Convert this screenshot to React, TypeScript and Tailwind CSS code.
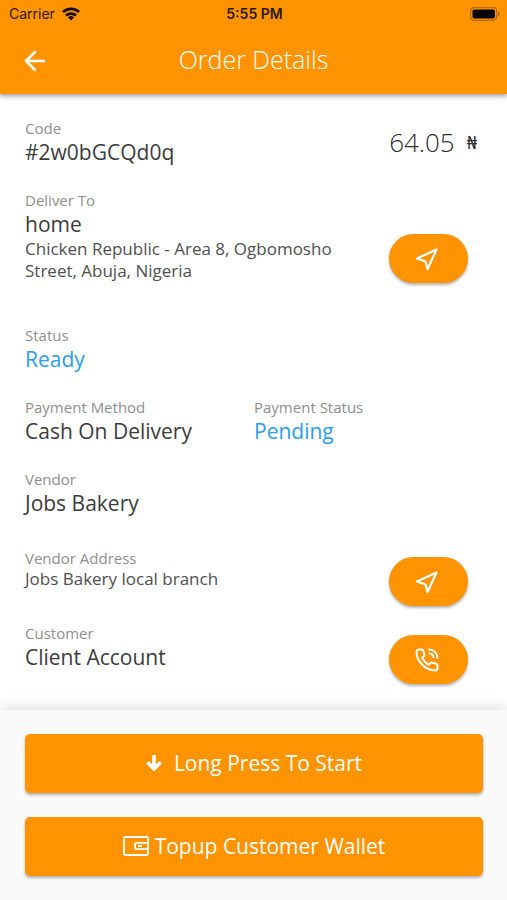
import type { ReactNode } from "react"

function Field({ label, children }: { label: string; children: ReactNode }) {
  return (
    <div className="min-w-0">
      <dt className="text-[15px] leading-5 text-[#8f8f8f]">{label}</dt>
      <dd>{children}</dd>
    </div>
  )
}

function Value({ children, accent = false }: { children: ReactNode; accent?: boolean }) {
  return <p className={`text-[21px] leading-7 ${accent ? "text-[#2a9df4]" : "text-[#3c3c3c]"}`}>{children}</p>
}

function PillButton({ label, children }: { label: string; children: ReactNode }) {
  return (
    <button
      type="button"
      aria-label={label}
      className="mr-[15px] flex h-[49px] w-[79px] shrink-0 items-center justify-center self-end rounded-full bg-[#ff9300] pr-1 text-white shadow-[0_2px_3px_rgba(0,0,0,0.3)]"
    >
      {children}
    </button>
  )
}

function NavigationIcon() {
  return (
    <svg className="size-6" viewBox="0 0 24 24" fill="none" stroke="currentColor" strokeWidth="2.2" strokeLinejoin="round">
      <path d="M21.500 2.500 12.500 22 10.500 14.500 2 11.500Z" />
    </svg>
  )
}

function PhoneIcon() {
  return (
    <svg
      className="size-6"
      viewBox="0 0 24 24"
      fill="none"
      stroke="currentColor"
      strokeWidth="2"
      strokeLinecap="round"
      strokeLinejoin="round"
    >
      <path d="M14.500 5.500A4.500 4.500 0 0 1 18.500 9.500M14 1.500A8.500 8.500 0 0 1 22.500 10" />
      <path d="M1.500 4C1.500 2.500 2.500 1.500 4 1.500h2.500c1 0 1.600.6 1.900 1.500l.9 3.400c.2.800 0 1.500-.6 2.100L7.200 10c1.400 2.900 3.500 5.200 6.600 6.800l1.600-1.500c.6-.6 1.300-.8 2.100-.6l3.400.9c1 .3 1.600.9 1.600 1.900V20c0 1.500-1 2.500-2.500 2.500C10.500 22.500 1.500 13.500 1.500 4Z" />
    </svg>
  )
}

function StatusBar() {
  return (
    <div className="grid h-7 grid-cols-3 items-center pr-[7px] pl-[9px] font-['Inter',sans-serif] text-[14px] leading-5 text-[#2b1900]">
      <div className="flex items-center gap-[7px]">
        <span>Carrier</span>
        <svg className="h-[14px] w-[18px] text-[#140c00]" viewBox="0 0 18 14" fill="none" stroke="currentColor" strokeWidth="2.8">
          <path d="M1 5a11.6 11.6 0 0 1 16 0M4 8.500a7.400 7.400 0 0 1 10 0" />
          <path d="M9 13.5 6 10.500a4.400 4.400 0 0 1 6 0Z" fill="currentColor" stroke="none" />
        </svg>
      </div>
      <span className="text-center font-semibold">5:55 PM</span>
      <svg className="h-[14px] w-[30px] justify-self-end" viewBox="0 0 30 14">
        <rect x="0.7" y="0.7" width="26" height="12.6" rx="3.5" fill="none" stroke="#b86a00" strokeWidth="1.2" />
        <rect x="2.5" y="2.5" width="22.4" height="9" rx="1.8" fill="#000" />
        <path d="M28 4.5c2 .8 2 4.2 0 5Z" fill="#b86a00" />
      </svg>
    </div>
  )
}

export default function App() {
  return (
    <div className="flex min-h-screen flex-col bg-white font-['Open_Sans',sans-serif] font-normal">
      <header className="relative bg-[#ff9300] shadow-[0_2px_5px_rgba(0,0,0,0.4)]">
        <StatusBar />
        <div className="grid h-[66px] grid-cols-[1fr_auto_1fr] items-center px-6 text-white">
          <button type="button" aria-label="Back" className="w-fit">
            <svg
              className="size-[22px]"
              viewBox="0 0 22 22"
              fill="none"
              stroke="currentColor"
              strokeWidth="2.6"
              strokeLinecap="round"
              strokeLinejoin="round"
            >
              <path d="M20 11H2.5M11 2 2 11l9 9" />
            </svg>
          </button>
          <h1 className="pb-1 text-[25px] leading-8 font-light">Order Details</h1>
        </div>
      </header>

      <main className="grow pt-6 pr-6 pb-[25px] pl-[25px]">
        <dl className="flex flex-col gap-6">
          <div className="flex justify-between">
            <Field label="Code">
              <Value>#2w0bGCQd0q</Value>
            </Field>
            <p className="flex items-center gap-3 pr-[6px] text-[26px] leading-8 font-light text-[#303030]">
              64.05 <span className="font-['Noto_Sans',sans-serif] text-[18px] font-normal">₦</span>
            </p>
          </div>

          <div className="mb-[18px] flex min-h-[93px] justify-between gap-4">
            <Field label="Deliver To">
              <Value>home</Value>
              <p className="text-[17px] leading-[22px] text-[#505050]">
                Chicken Republic - Area 8, Ogbomosho Street, Abuja, Nigeria
              </p>
            </Field>
            <PillButton label="Navigate to delivery address">
              <NavigationIcon />
            </PillButton>
          </div>

          <Field label="Status">
            <Value accent>Ready</Value>
          </Field>

          <div className="grid grid-cols-2">
            <Field label="Payment Method">
              <Value>Cash On Delivery</Value>
            </Field>
            <Field label="Payment Status">
              <Value accent>Pending</Value>
            </Field>
          </div>

          <Field label="Vendor">
            <Value>Jobs Bakery</Value>
          </Field>

          <div className="mt-[7px] flex min-h-[58px] justify-between">
            <Field label="Vendor Address">
              <p className="text-[17px] leading-[22px] text-[#505050]">Jobs Bakery local branch</p>
            </Field>
            <PillButton label="Navigate to vendor">
              <NavigationIcon />
            </PillButton>
          </div>

          <div className="-mt-[7px] flex min-h-[61px] justify-between">
            <Field label="Customer">
              <Value>Client Account</Value>
            </Field>
            <PillButton label="Call customer">
              <PhoneIcon />
            </PillButton>
          </div>
        </dl>
      </main>

      <footer className="flex flex-col gap-6 bg-[#fafafa] py-6 pr-6 pl-[25px] text-[21px] leading-7 text-white shadow-[0_-2px_14px_rgba(0,0,0,0.14)]">
        <button
          type="button"
          className="flex h-[59px] items-center justify-center gap-3 rounded-[5px] bg-[#ff9300] pb-[2px] shadow-[0_2px_3px_rgba(0,0,0,0.3)]"
        >
          <svg className="size-4" viewBox="0 0 16 16" fill="none" stroke="currentColor" strokeWidth="3.6">
            <path d="M8 0v13M1.3 7.3 8 14l6.700-6.700" />
          </svg>
          Long Press To Start
        </button>
        <button
          type="button"
          className="flex h-[59px] items-center justify-center gap-[6px] rounded-[5px] bg-[#ff9300] pb-[2px] shadow-[0_2px_3px_rgba(0,0,0,0.3)]"
        >
          <svg className="h-5 w-[26px]" viewBox="0 0 26 20" fill="none" stroke="currentColor" strokeWidth="1.8">
            <rect x="1" y="1" width="24" height="18" rx="1.5" />
            <path d="M25 6.800H14a2 2 0 0 0-2 2v2.400a2 2 0 0 0 2 2H25M15 10h4" />
          </svg>
          Topup Customer Wallet
        </button>
      </footer>
    </div>
  )
}
